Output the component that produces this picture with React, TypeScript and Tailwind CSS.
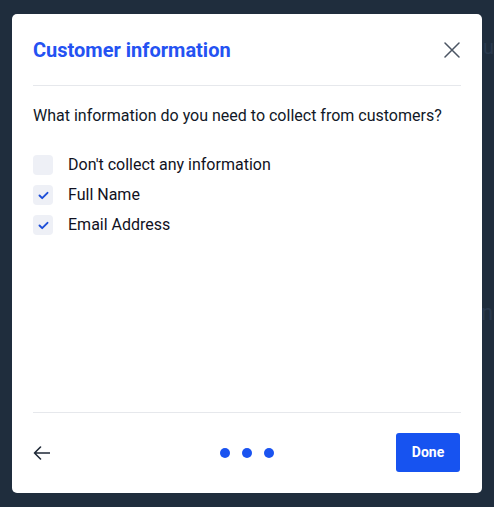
import { useState } from "react"

interface Option {
  id: string
  label: string
}

const options: Option[] = [
  { id: "none", label: "Don't collect any information" },
  { id: "name", label: "Full Name" },
  { id: "email", label: "Email Address" },
]

function CheckIcon() {
  return (
    <svg width="11" height="9" viewBox="0 0 11 9" fill="none">
      <path d="M1.5 4.5L4.2 7.2L9.5 1.8" stroke="#1d4ed8" strokeWidth="1.9" strokeLinecap="round" strokeLinejoin="round" />
    </svg>
  )
}

export default function App() {
  const [checked, setChecked] = useState<Record<string, boolean>>({ none: false, name: true, email: true })

  const toggle = (id: string) => setChecked((c) => ({ ...c, [id]: !c[id] }))

  return (
    <div className="relative w-[494px] h-[507px] bg-[#1f2d3d] overflow-hidden font-['Roboto',sans-serif]">
      {/* page behind the backdrop */}
      <div className="text-[#2a3a4e]">
        <span className="absolute left-[483px] top-[32px] text-[20px]">u</span>
        <span className="absolute left-[481px] top-[296px] text-[22px]">n</span>
      </div>

      {/* modal */}
      <div className="absolute left-[12px] top-[14px] w-[470px] h-[479px] bg-white rounded-[5px] flex flex-col px-[21px]">
        <div className="flex items-center justify-between pt-[22px] pb-[21px] border-b border-[#e6e8ec]">
          <h2 className="text-[20px] leading-[28px] font-bold text-[#2452f2]">Customer information</h2>
          <button className="w-[16px] h-[16px] mr-[1px] flex items-center justify-center">
            <svg width="16" height="16" viewBox="0 0 16 16" fill="none">
              <path d="M1 1L15 15M15 1L1 15" stroke="#4b5563" strokeWidth="1.5" strokeLinecap="round" />
            </svg>
          </button>
        </div>

        <p className="mt-[18px] text-[16px] leading-[24px] text-[#111827]">
          What information do you need to collect from customers?
        </p>

        <div className="mt-[27px] flex flex-col gap-[10px]">
          {options.map((o) => (
            <label key={o.id} className="flex items-center gap-[15px] cursor-pointer" onClick={() => toggle(o.id)}>
              <span className="w-[20px] h-[20px] rounded-[4px] bg-[#eef0f6] flex items-center justify-center">
                {checked[o.id] && <CheckIcon />}
              </span>
              <span className="text-[16px] leading-[20px] text-[#111122]">{o.label}</span>
            </label>
          ))}
        </div>

        <div className="mt-auto border-t border-[#e6e8ec] pt-[20px] pb-[21px] flex items-center justify-between">
          <button className="w-[64px] h-[39px] flex items-center">
            <svg width="17" height="14" viewBox="0 0 17 14" fill="none">
              <path d="M16.5 7H1.5M7.5 1L1.5 7L7.5 13" stroke="#1f2937" strokeWidth="1.6" strokeLinecap="round" strokeLinejoin="round" />
            </svg>
          </button>
          <div className="flex items-center gap-[12px]">
            <span className="w-[10px] h-[10px] rounded-full bg-[#1a53f0]" />
            <span className="w-[10px] h-[10px] rounded-full bg-[#1a53f0]" />
            <span className="w-[10px] h-[10px] rounded-full bg-[#1a53f0]" />
          </div>
          <button className="w-[64px] h-[39px] mr-[1px] rounded-[3px] bg-[#1753f0] text-white text-[14px] font-bold">
            Done
          </button>
        </div>
      </div>
    </div>
  )
}
